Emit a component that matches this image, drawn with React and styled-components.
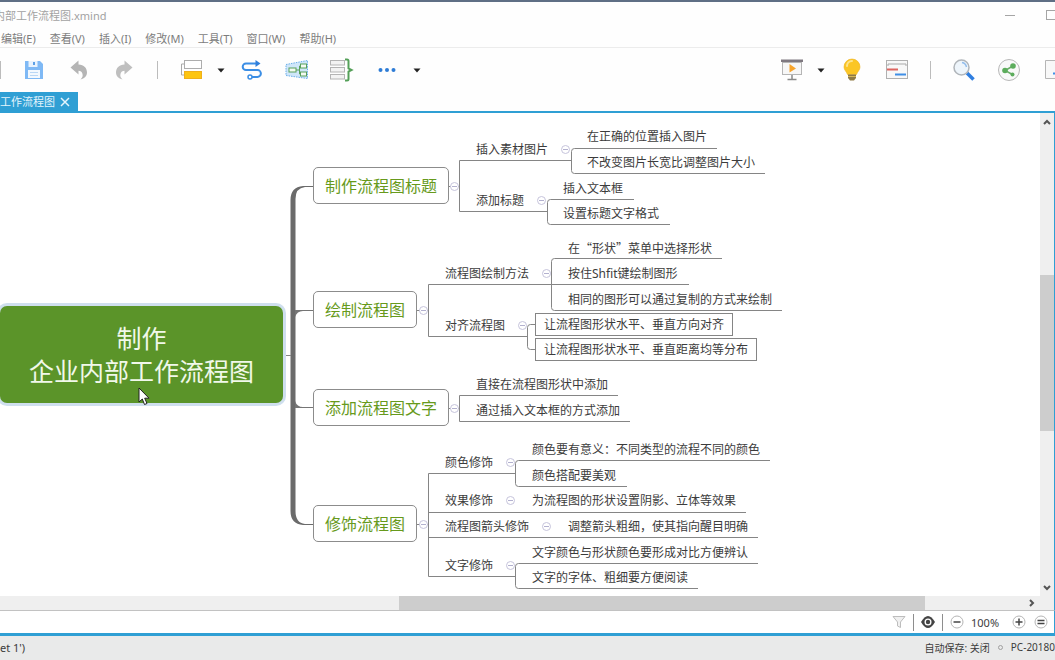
import React from 'react'
import styled, { createGlobalStyle, css } from 'styled-components';

const theme = {
  colors: {
    accent: '#2f9fd4',
    green: '#5b9429',
    topicText: '#679a1c',
    text: '#3c3c3c',
    line: '#858585',
    muted: '#7c7c7c',
    track: '#efefef',
    thumb: '#cdcdcd',
  },
  font: `'Noto Sans', 'Noto Sans CJK SC', sans-serif`,
  cjkFont: `'Noto Sans CJK SC', sans-serif`,
};

const GlobalStyle = createGlobalStyle`
  * {
    box-sizing: border-box;
  }
  body {
    margin: 0;
    background: #fefefe;
    font-family: ${theme.font};
    color: ${theme.colors.text};
  }
  button {
    padding: 0;
    border: 0;
    background: none;
    font: inherit;
    color: inherit;
  }
`

const Window = styled.div`
  display: flex;
  flex-direction: column;
  min-height: 100vh;
  overflow: hidden;
  border-top: 2px solid #5f6f85;
`

const TitleBar = styled.header`
  display: flex;
  align-items: center;
  justify-content: space-between;
  height: 26px;
  overflow: hidden;
  font-size: 11px;
  color: #a2a2a2;
  white-space: nowrap;
  .title {
    margin-left: -6px;
  }
`

const WindowButtons = styled.div`
  display: flex;
  gap: 21px;
  margin-right: -6px;
  button {
    width: 20px;
    height: 20px;
  }
  svg {
    display: block;
  }
`

const MenuBar = styled.nav`
  display: flex;
  align-items: center;
  gap: 14px;
  height: 20px;
  padding: 2px 0 0 1px;
  border-bottom: 1px solid #ececec;
  button {
    font-size: 11px;
    line-height: 18px;
    color: ${theme.colors.muted};
    white-space: nowrap;
  }
`

const Toolbar = styled.div`
  display: flex;
  justify-content: space-between;
  height: 44px;
  overflow: hidden;
`

const ToolGroup = styled.div`
  display: flex;
  align-items: center;
  flex-shrink: 0;
  margin-left: ${props => (props.$side === 'left' ? '-11px' : '0')};
  margin-right: ${props => (props.$side === 'right' ? '-21px' : '0')};
`

const ToolButton = styled.button`
  display: flex;
  align-items: center;
  justify-content: center;
  width: ${props => (props.$caret ? '16px' : '45px')};
  height: 36px;
`

const ToolDivider = styled.span`
  width: 22px;
  height: 18px;
  display: flex;
  justify-content: center;
  &::before {
    content: '';
    width: 1px;
    background: #bcbcbc;
  }
`

const TabBar = styled.div`
  display: flex;
  height: 21px;
  border-bottom: 2px solid ${theme.colors.accent};
`

const Tab = styled.div`
  display: flex;
  align-items: center;
  gap: 5px;
  padding-right: 8px;
  background: ${theme.colors.accent};
  color: #e4f4fc;
  font-size: 11px;
  line-height: 19px;
  white-space: nowrap;
  svg {
    display: block;
  }
`

const Editor = styled.main`
  display: flex;
  flex: 1;
  border-right: 1px solid ${theme.colors.accent};
`

const Canvas = styled.div`
  position: relative;
  flex: 1;
  min-height: 483px;
  overflow: hidden;
  background: #fff;
`

const Connectors = styled.svg`
  position: absolute;
  inset: 0;
  width: 100%;
  height: 100%;
  fill: none;
  stroke: ${theme.colors.line};
  stroke-width: 1;
`

const placed = css`
  position: absolute;
  left: ${props => props.$x}px;
  top: ${props => props.$y}px;
  white-space: nowrap;
`

const CentralTopic = styled.div`
  ${placed};
  width: 283px;
  padding: 16px 0 15px;
  border-radius: 7px;
  box-shadow: 0 0 0 3px #cfdfee;
  background: ${theme.colors.green};
  color: #f1f8ea;
  font-size: 25px;
  line-height: 33px;
  text-align: center;
`

const MainTopic = styled.div`
  ${placed};
  padding: 2px 11px 0;
  border: 1px solid #8c8c8c;
  border-radius: 5px;
  background: #fff;
  color: ${theme.colors.topicText};
  font-size: 16px;
  line-height: 33px;
`

const SubTopic = styled.div`
  ${placed};
  font-family: ${props => (props.$cjk ? theme.cjkFont : theme.font)};
  font-size: 12px;
  line-height: 22px;
`

const BoxedTopic = styled(SubTopic)`
  padding: 0 8px;
  border: 1px solid ${theme.colors.line};
  line-height: 21px;
`

const Fold = styled.button`
  ${placed};
  display: flex;
  align-items: center;
  justify-content: center;
  width: 9px;
  height: 9px;
  border: 1px solid #c6c4dc;
  border-radius: 50%;
  background: #fff;
  &::before {
    content: '';
    width: 5px;
    height: 1px;
    background: #b3b1cf;
  }
`

const Pointer = styled.svg`
  ${placed};
`

const VerticalScroll = styled.div`
  display: flex;
  flex-direction: column;
  width: 14px;
  background: ${theme.colors.track};
  button {
    display: flex;
    align-items: center;
    justify-content: center;
    height: 17px;
  }
`

const HorizontalScroll = styled.div`
  display: flex;
  height: 15px;
  border-right: 1px solid ${theme.colors.accent};
  border-bottom: 1px solid #c2c2c2;
  background: ${theme.colors.track};
  button {
    display: flex;
    align-items: center;
    justify-content: center;
    width: 17px;
    margin-right: 14px;
  }
`

const Span = styled.div`
  flex: ${props => props.$size};
  background: ${props => (props.$thumb ? theme.colors.thumb : 'transparent')};
`

const SheetBar = styled.div`
  display: flex;
  align-items: center;
  justify-content: flex-end;
  gap: 6px;
  height: 25px;
  padding-right: 5px;
  border-right: 1px solid ${theme.colors.accent};
  border-bottom: 3px solid ${theme.colors.accent};
  background: #fff;
  font-size: 11px;
  button {
    width: 16px;
    height: 16px;
  }
  svg {
    display: block;
  }
  output {
    width: 34px;
  }
`

const SheetDivider = styled.span`
  width: 1px;
  height: 17px;
  background: #8e8e8e;
`

const StatusBar = styled.footer`
  display: flex;
  align-items: center;
  justify-content: space-between;
  height: 24px;
  padding-bottom: 2px;
  overflow: hidden;
  background: #e9eaea;
  font-size: 10px;
  white-space: nowrap;
  .sheet {
    font-size: 11px;
  }
  .info {
    display: flex;
    align-items: center;
    gap: 8px;
  }
  .dot {
    width: 5px;
    height: 5px;
    border: 1px solid #a0a0a0;
    border-radius: 50%;
  }
`

const menus = ['编辑(E)', '查看(V)', '插入(I)', '修改(M)', '工具(T)', '窗口(W)', '帮助(H)'];

const mainTopics = [
  { x: 313, y: 54, text: '制作流程图标题' },
  { x: 313, y: 178, text: '绘制流程图' },
  { x: 313, y: 276, text: '添加流程图文字' },
  { x: 313, y: 392, text: '修饰流程图' },
];

const subTopics = [
  { x: 476, y: 26, text: '插入素材图片' },
  { x: 587, y: 13, text: '在正确的位置插入图片' },
  { x: 587, y: 39, text: '不改变图片长宽比调整图片大小' },
  { x: 476, y: 77, text: '添加标题' },
  { x: 563, y: 65, text: '插入文本框' },
  { x: 563, y: 90, text: '设置标题文字格式' },
  { x: 445, y: 150, text: '流程图绘制方法' },
  { x: 568, y: 124, text: '在“形状”菜单中选择形状', cjk: true },
  { x: 568, y: 150, text: '按住Shfit键绘制图形' },
  { x: 568, y: 176, text: '相同的图形可以通过复制的方式来绘制' },
  { x: 445, y: 202, text: '对齐流程图' },
  { x: 476, y: 261, text: '直接在流程图形状中添加' },
  { x: 476, y: 287, text: '通过插入文本框的方式添加' },
  { x: 445, y: 339, text: '颜色修饰' },
  { x: 532, y: 326, text: '颜色要有意义：不同类型的流程不同的颜色' },
  { x: 532, y: 352, text: '颜色搭配要美观' },
  { x: 445, y: 377, text: '效果修饰' },
  { x: 532, y: 377, text: '为流程图的形状设置阴影、立体等效果' },
  { x: 445, y: 403, text: '流程图箭头修饰' },
  { x: 568, y: 403, text: '调整箭头粗细，使其指向醒目明确' },
  { x: 445, y: 442, text: '文字修饰' },
  { x: 532, y: 429, text: '文字颜色与形状颜色要形成对比方便辨认' },
  { x: 532, y: 454, text: '文字的字体、粗细要方便阅读' },
];

const boxedTopics = [
  { x: 535, y: 200, text: '让流程图形状水平、垂直方向对齐' },
  { x: 535, y: 225, text: '让流程图形状水平、垂直距离均等分布' },
];

const folds = [
  [450, 69], [561, 32], [537, 83], [419, 193], [542, 156], [518, 208],
  [450, 291], [419, 407], [506, 345], [506, 383], [542, 409], [506, 448],
];

// right-angled and rounded branches, one path per parent topic
const branches = [
  'M448 73.500H459.500M571 47.500H459.500V98.500H547',
  'M717 35.500H574.500Q571.500 35.500 571.500 38.500V57.500Q571.500 60.500 574.500 60.500H765',
  'M634 86.500H550.500Q547.500 86.500 547.500 89.500V108.500Q547.500 111.500 550.500 111.500H670',
  'M417 197.500H428.500M689 171.500H428.500V223.500H527',
  'M722 145.500H554.500Q551.500 145.500 551.500 148.500V194.500Q551.500 197.500 554.500 197.500H782',
  'M535 211.500H530.500Q527.500 211.500 527.500 214.500V233.500Q527.500 236.500 530.500 236.500H535',
  'M448 295.500H459.500M618 282.500H459.500V308.500H630',
  'M417 411.500H428.500M515 360.500H428.500V463.500H515M428 399.500H746M428 424.500H758',
  'M770 347.500H518.500Q515.500 347.500 515.500 350.500V370.500Q515.500 373.500 518.500 373.500H627',
  'M758 450.500H518.500Q515.500 450.500 515.500 453.500V472.500Q515.500 475.500 518.500 475.500H698',
];

const Caret = () => (
  <svg width="8" height="5" viewBox="0 0 8 5"><path d="M0.500 0.500h7L4 4.500z" fill="#222" /></svg>
);

const SaveIcon = () => (
  <svg width="20" height="20" viewBox="0 0 20 20">
    <path d="M1 1h15l3 3v15H1z" fill="#7fb9f5" />
    <path d="M4.500 1h9v6h-9z" fill="#e8f3fe" />
    <path d="M9 2h2v3H9z" fill="#5b9fe6" />
    <path d="M4 10h12v8H4z" fill="#f2f8fe" />
    <path d="M6 12.500h8M6 15.500h8" stroke="#b9d7f5" />
  </svg>
);

const UndoIcon = ({ flipped }) => (
  <svg width="20" height="20" viewBox="0 0 20 20">
    <path
      transform={flipped ? 'translate(20 0) scale(-1 1)' : undefined}
      d="M1.500 7.500 9.500 0.500V4.500C15 4.800 18 8 18 12.500C18 16 15.500 18.500 11.500 19.500C13.500 17.500 14 16 13.500 14C13 11.500 11.500 10.800 9.500 10.800V14.500Z"
      fill={flipped ? '#bfbfbf' : '#b5b5b5'}
    />
  </svg>
);

const TopicIcon = () => (
  <svg width="22" height="22" viewBox="0 0 22 22" fill="none">
    <path d="M4 5H1.500v11H4" stroke="#a9a9a9" />
    <rect x="4.500" y="1.500" width="17" height="8" fill="#fff" stroke="#adadad" />
    <rect x="4.500" y="12.500" width="17" height="7" fill="#fdc511" stroke="#efb01b" />
  </svg>
);

const RelationIcon = () => (
  <svg width="22" height="22" viewBox="0 0 22 22" fill="none" stroke="#3b8ee5" strokeWidth="2">
    <path d="M16 4.500H5a3.300 3.300 0 0 0 0 6.600h11.500a3.400 3.400 0 0 1 0 6.800H11" />
    <path d="M14.500 1v7l5-3.500z" fill="#2f7fdc" stroke="none" />
    <circle cx="9" cy="17.900" r="2" strokeWidth="1.500" fill="#fff" />
  </svg>
);

const BoundaryIcon = () => (
  <svg width="24" height="22" viewBox="0 0 24 22" fill="none">
    <path d="M1 5.500 22.500 1.500v18L1 16.500z" fill="#cfe6fa" stroke="#6aaee8" strokeDasharray="1.500 1" />
    <path d="M11 11h3.500M14.500 11V7H16M14.500 11v4H16" stroke="#58a05a" />
    <rect x="4" y="9" width="7" height="4" fill="#f4faf2" stroke="#58a05a" />
    <rect x="15.500" y="5" width="6" height="4" fill="#f4faf2" stroke="#58a05a" />
    <rect x="15.500" y="13" width="6" height="4" fill="#f4faf2" stroke="#58a05a" />
  </svg>
);

const SummaryIcon = () => (
  <svg width="26" height="24" viewBox="0 0 26 24" fill="none">
    <g fill="#f3f3f3" stroke="#b4b4b4">
      <rect x="1.500" y="2.500" width="14" height="4.500" />
      <rect x="1.500" y="9.500" width="14" height="4.500" />
      <rect x="1.500" y="16.500" width="14" height="4.500" />
    </g>
    <path d="M16 1.500h2q1.500 0 1.500 1.500v7.500l3 1.500-3 1.500V21q0 1.500-1.500 1.500h-2" stroke="#55a059" strokeWidth="2" />
  </svg>
);

const MoreIcon = () => (
  <svg width="18" height="6" viewBox="0 0 18 6" fill="#2e7cd6">
    <circle cx="2.500" cy="3" r="2" /><circle cx="9" cy="3" r="2" /><circle cx="15.500" cy="3" r="2" />
  </svg>
);

const PresentIcon = () => (
  <svg width="24" height="24" viewBox="0 0 24 24" fill="none">
    <path d="M13 17v4M8.500 21.500h9" stroke="#8a8a8a" strokeWidth="1.500" />
    <rect x="3.500" y="4.500" width="19" height="12" fill="#f7f7f7" stroke="#b5b5b5" />
    <path d="M2 1.500h22v2.500H2z" fill="#7e7880" />
    <path d="M10.500 6v8.500l6.500-4z" fill="#f8a52c" />
  </svg>
);

const BulbIcon = () => (
  <svg width="18" height="24" viewBox="0 0 18 24">
    <path d="M9 1a8 8 0 0 1 8 8c0 3-2.500 4.500-3.500 7.500h-9C3.500 13.500 1 12 1 9a8 8 0 0 1 8-8z" fill="#fbc625" stroke="#eeb11c" strokeWidth=".6" />
    <path d="M4 8a5 5 0 0 1 5-5" stroke="#fee48d" strokeWidth="2" fill="none" strokeLinecap="round" />
    <path d="M5 16.500h8V20l-2 2.500H7L5 20z" fill="#8f7a45" />
    <path d="M5 18.500h8" stroke="#d4b659" />
  </svg>
);

const GanttIcon = () => (
  <svg width="24" height="22" viewBox="0 0 24 22" fill="none">
    <rect x="1.500" y="1.500" width="21" height="18" fill="#f8f8f8" stroke="#b0b0b0" />
    <path d="M3 7V5h18v2" stroke="#a9a9a9" />
    <path d="M2 10.500h11" stroke="#dc6560" strokeWidth="2" />
    <path d="M10 15.500h11" stroke="#3f8fe6" strokeWidth="2" />
  </svg>
);

const SearchIcon = () => (
  <svg width="24" height="24" viewBox="0 0 24 24" fill="none">
    <path d="M15 15 21.500 21.500" stroke="#2f7ee0" strokeWidth="3.500" />
    <circle cx="9.500" cy="9.500" r="7.500" fill="#eef5fb" stroke="#b0b5ba" strokeWidth="1.500" />
    <path d="M10 4.500a5.500 5.500 0 0 1 4.500 4.500" stroke="#92bdec" strokeWidth="1.500" />
  </svg>
);

const ShareIcon = () => (
  <svg width="24" height="24" viewBox="0 0 24 24" fill="none">
    <circle cx="12" cy="12" r="10.500" fill="#f9f9f9" stroke="#b8b8b8" />
    <path d="M16 8 8 12.500l7.500 4" stroke="#6aae68" strokeWidth="1.500" />
    <g fill="#5cac5c"><circle cx="16" cy="8" r="2.800" /><circle cx="8" cy="12.500" r="2.800" /><circle cx="15.500" cy="16.500" r="2" /></g>
  </svg>
);

const ExportIcon = () => (
  <svg width="20" height="22" viewBox="0 0 20 22" fill="none">
    <path d="M1.500 1.500h12l5 5v13h-17z" fill="#f8f8f8" stroke="#b5b5b5" />
    <path d="M9 14.500h6" stroke="#3f8fe6" strokeWidth="2" />
  </svg>
);

const Chevron = ({ d }) => (
  <svg width="8" height="8" viewBox="0 0 8 8" fill="none" stroke="#555" strokeWidth="2"><path d={d} /></svg>
);

const RoundIcon = ({ d }) => (
  <svg width="16" height="16" viewBox="0 0 16 16" fill="none">
    <circle cx="8" cy="8" r="6" stroke="#b5b5b5" />
    <path d={d} stroke="#444" strokeWidth="1.500" />
  </svg>
);

const MindMap = () => (
  <Canvas>
    <Connectors>
      {/* tapered trunk from the central topic */}
      <path
        d="M290.500 87Q290.500 74 303 73H313V74H305Q295.500 75 295.500 86V398Q295.500 410 305 411H313V412H303Q290.500 411 290.500 398Z"
        fill="#6b6b6b"
        stroke="none"
      />
      <path d="M295 197H313V198H303Q297 198 295 204ZM295 295H313V294H303Q297 294 295 288Z" fill="#757575" stroke="none" />
      <path d="M286 242.500H291" />
      {branches.map(d => <path key={d} d={d} />)}
    </Connectors>
    <CentralTopic $x={0} $y={193}>制作<br />企业内部工作流程图</CentralTopic>
    {mainTopics.map(({ x, y, text }) => <MainTopic key={text} $x={x} $y={y}>{text}</MainTopic>)}
    {subTopics.map(({ x, y, text, cjk }) => <SubTopic key={text} $x={x} $y={y} $cjk={cjk}>{text}</SubTopic>)}
    {boxedTopics.map(({ x, y, text }) => <BoxedTopic key={text} $x={x} $y={y}>{text}</BoxedTopic>)}
    {folds.map(([x, y]) => <Fold key={`${x}-${y}`} $x={x} $y={y} aria-label="折叠" />)}
    <Pointer $x={138} $y={274} width="13" height="19" viewBox="0 0 13 19">
      <path d="M1 1v14l3.300-3 2.200 5.500 2.500-1-2.300-5.300H11z" fill="#fff" stroke="#222" />
    </Pointer>
  </Canvas>
);

export default function App() {
  return (
    <React.Fragment>
      <GlobalStyle />
      <Window>
        <TitleBar>
          <span className="title">内部工作流程图.xmind</span>
          <WindowButtons>
            <button aria-label="最小化">
              <svg width="20" height="20" viewBox="0 0 20 20"><path d="M5 10.500h10" stroke="#a5a5a5" /></svg>
            </button>
            <button aria-label="最大化">
              <svg width="20" height="20" viewBox="0 0 20 20"><rect x="5.500" y="5.500" width="9" height="9" fill="none" stroke="#a5a5a5" /></svg>
            </button>
          </WindowButtons>
        </TitleBar>
        <MenuBar>
          {menus.map(menu => <button key={menu}>{menu}</button>)}
        </MenuBar>
        <Toolbar>
          <ToolGroup $side="left">
            <ToolDivider />
            <ToolButton aria-label="保存"><SaveIcon /></ToolButton>
            <ToolButton aria-label="撤销"><UndoIcon /></ToolButton>
            <ToolButton aria-label="重做"><UndoIcon flipped /></ToolButton>
            <ToolDivider />
            <ToolButton aria-label="主题"><TopicIcon /></ToolButton>
            <ToolButton $caret aria-label="更多主题"><Caret /></ToolButton>
            <ToolButton aria-label="联系"><RelationIcon /></ToolButton>
            <ToolButton aria-label="外框"><BoundaryIcon /></ToolButton>
            <ToolButton aria-label="概要"><SummaryIcon /></ToolButton>
            <ToolButton aria-label="更多"><MoreIcon /></ToolButton>
            <ToolButton $caret aria-label="更多选项"><Caret /></ToolButton>
          </ToolGroup>
          <ToolGroup $side="right">
            <ToolButton aria-label="演示"><PresentIcon /></ToolButton>
            <ToolButton $caret aria-label="演示选项"><Caret /></ToolButton>
            <ToolButton aria-label="头脑风暴"><BulbIcon /></ToolButton>
            <ToolButton aria-label="甘特图"><GanttIcon /></ToolButton>
            <ToolDivider />
            <ToolButton aria-label="搜索"><SearchIcon /></ToolButton>
            <ToolButton aria-label="分享"><ShareIcon /></ToolButton>
            <ToolButton aria-label="导出"><ExportIcon /></ToolButton>
          </ToolGroup>
        </Toolbar>
        <TabBar>
          <Tab>
            <span>工作流程图</span>
            <button aria-label="关闭">
              <svg width="10" height="10" viewBox="0 0 10 10"><path d="M1 1l8 8M9 1 1 9" stroke="#e4f4fc" strokeWidth="1.500" /></svg>
            </button>
          </Tab>
        </TabBar>
        <Editor>
          <MindMap />
          <VerticalScroll>
            <button aria-label="向上"><Chevron d="M1 6l3-3 3 3" /></button>
            <Span $size={145} />
            <Span $size={156} $thumb />
            <Span $size={148} />
            <button aria-label="向下"><Chevron d="M1 2l3 3 3-3" /></button>
          </VerticalScroll>
        </Editor>
        <HorizontalScroll>
          <Span $size={399} />
          <Span $size={526} $thumb />
          <Span $size={98} />
          <button aria-label="向右"><Chevron d="M2 1l3 3-3 3" /></button>
        </HorizontalScroll>
        <SheetBar>
          <button aria-label="筛选">
            <svg width="16" height="16" viewBox="0 0 16 16"><path d="M2 2.500h12L9.500 8v5.500l-3-1.500V8z" fill="#f0f0f0" stroke="#bdbdbd" /></svg>
          </button>
          <SheetDivider />
          <button aria-label="显示">
            <svg width="16" height="16" viewBox="0 0 16 16" fill="none">
              <path d="M1 8q7-12 14 0-7 12-14 0z" fill="#444" />
              <circle cx="8" cy="8" r="3.500" fill="#fff" /><circle cx="8" cy="8" r="2.200" fill="#444" />
            </svg>
          </button>
          <SheetDivider />
          <button aria-label="缩小"><RoundIcon d="M4.500 8h7" /></button>
          <output>100%</output>
          <button aria-label="放大"><RoundIcon d="M4.500 8h7M8 4.500v7" /></button>
          <button aria-label="适应"><RoundIcon d="M4.500 6.500h7M4.500 9.500h7" /></button>
        </SheetBar>
        <StatusBar>
          <span className="sheet">et 1')</span>
          <div className="info">
            <span>自动保存: 关闭</span>
            <span className="dot" />
            <span>PC-20180</span>
          </div>
        </StatusBar>
      </Window>
    </React.Fragment>
  )
}
